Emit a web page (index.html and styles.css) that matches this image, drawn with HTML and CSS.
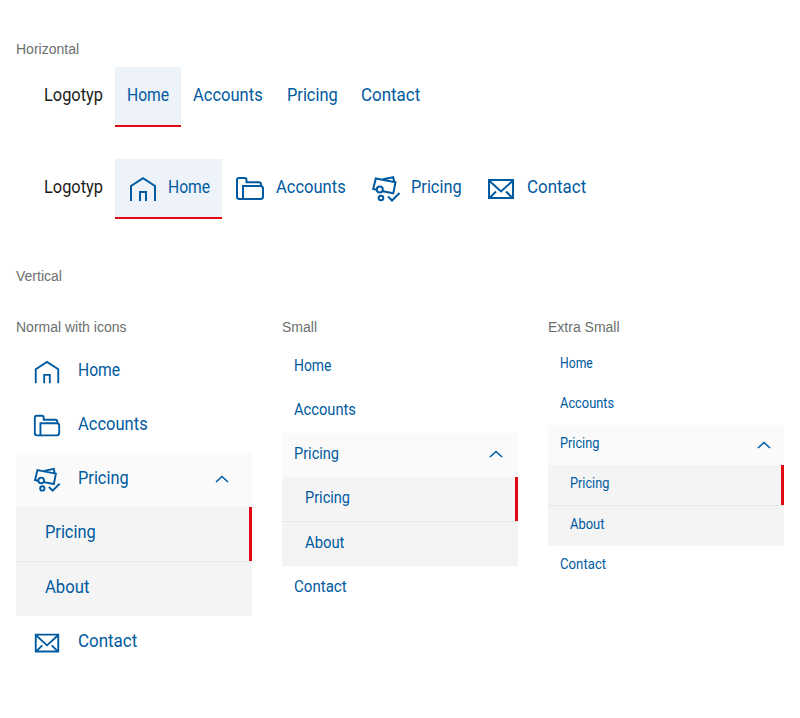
FILE: index.html
```html
<!DOCTYPE html>
<html lang="en">
<head>
<meta charset="utf-8">
<title>Navigation</title>
<link rel="stylesheet" href="styles.css">
</head>
<body>
<svg class="defs" width="0" height="0" aria-hidden="true">
  <symbol id="home" viewBox="0 0 32 32"><path d="M4 28V13L16 5.200 28 13V28M13 28V19H19V28"/></symbol>
  <symbol id="folder" viewBox="0 0 32 32"><path d="M9 26H5.500Q3 26 3 23.500V7Q3 5 5 5H10.500Q12.500 5 12.500 7V9.300H25Q27 9.300 27 11.300V13M9 26V13H26.500Q29 13 29 15.500V23.500Q29 26 26.500 26Z"/></symbol>
  <symbol id="pricing" viewBox="0 0 32 32"><path d="M6.500 16.800L3.200 16 5.800 5.500 25.500 9.200 23.300 20.300 12.800 18.300M13 6.200L23.200 4.200 24.300 9"/><circle cx="9.800" cy="16.400" r="3"/><circle cx="11" cy="25" r="2.300"/><path d="M18 23.500L22 27.500 29.500 20"/></symbol>
  <symbol id="mail" viewBox="0 0 32 32"><path d="M4 7H28V25H4ZM4 7.500L16 18.500 28 7.500M4.500 25L11 18.500M27.500 25L21 18.500"/></symbol>
  <symbol id="up" viewBox="0 0 14 8"><path d="M1 7L7 1.500 13 7"/></symbol>
</svg>

<h2 class="caption">Horizontal</h2>
<nav class="bar">
  <span class="item logo"><span class="label logotyp">Logotyp</span></span>
  <a class="item active"><span class="label home">Home</span></a>
  <a class="item"><span class="label accounts">Accounts</span></a>
  <a class="item"><span class="label pricing">Pricing</span></a>
  <a class="item"><span class="label contact">Contact</span></a>
</nav>
<nav class="bar with-icons">
  <span class="item logo"><span class="label logotyp">Logotyp</span></span>
  <a class="item active"><svg class="icon"><use href="#home"/></svg><span class="label home">Home</span></a>
  <a class="item"><svg class="icon"><use href="#folder"/></svg><span class="label accounts">Accounts</span></a>
  <a class="item"><svg class="icon"><use href="#pricing"/></svg><span class="label pricing">Pricing</span></a>
  <a class="item"><svg class="icon"><use href="#mail"/></svg><span class="label contact">Contact</span></a>
</nav>

<h2 class="caption vertical-title">Vertical</h2>
<div class="columns">
  <section>
    <h3 class="caption">Normal with icons</h3>
    <nav class="menu normal">
      <a class="row"><svg class="icon"><use href="#home"/></svg><span class="label home">Home</span></a>
      <a class="row"><svg class="icon"><use href="#folder"/></svg><span class="label accounts">Accounts</span></a>
      <a class="row open"><svg class="icon"><use href="#pricing"/></svg><span class="label pricing">Pricing</span><svg class="chevron"><use href="#up"/></svg></a>
      <div class="sub">
        <a class="row current"><span class="label pricing">Pricing</span></a>
        <a class="row"><span class="label about">About</span></a>
      </div>
      <a class="row"><svg class="icon"><use href="#mail"/></svg><span class="label contact">Contact</span></a>
    </nav>
  </section>
  <section>
    <h3 class="caption">Small</h3>
    <nav class="menu small">
      <a class="row"><span class="label home">Home</span></a>
      <a class="row"><span class="label accounts">Accounts</span></a>
      <a class="row open"><span class="label pricing">Pricing</span><svg class="chevron"><use href="#up"/></svg></a>
      <div class="sub">
        <a class="row current"><span class="label pricing">Pricing</span></a>
        <a class="row"><span class="label about">About</span></a>
      </div>
      <a class="row"><span class="label contact">Contact</span></a>
    </nav>
  </section>
  <section>
    <h3 class="caption">Extra Small</h3>
    <nav class="menu xsmall">
      <a class="row"><span class="label home">Home</span></a>
      <a class="row"><span class="label accounts">Accounts</span></a>
      <a class="row open"><span class="label pricing">Pricing</span><svg class="chevron"><use href="#up"/></svg></a>
      <div class="sub">
        <a class="row current"><span class="label pricing">Pricing</span></a>
        <a class="row"><span class="label about">About</span></a>
      </div>
      <a class="row"><span class="label contact">Contact</span></a>
    </nav>
  </section>
</div>
</body>
</html>
```
FILE: styles.css
```css
* { box-sizing: border-box; }

body {
  margin: 0;
  padding: 39px 16px 0;
  background: #fff;
  color: #005aa0;
  font-family: Roboto, "Liberation Sans", sans-serif;
}

.defs { position: absolute; }

svg { fill: none; stroke: #005aa0; stroke-width: 2; flex: none; }

.caption {
  margin: 0;
  height: 20px;
  font: 400 14px/20px "Liberation Sans", Arial, sans-serif;
  color: #6b6f6e;
}

/* Labels are condensed; widths are relative to the font size. */
.label {
  flex: none;
  display: block;
  white-space: nowrap;
  transform-origin: 0 50%;
}
.logotyp { width: 3.278em; transform: scaleX(.91); }
.home { width: 2.333em; transform: scaleX(.87); }
.accounts { width: 3.889em; transform: scaleX(.918); }
.pricing { width: 2.778em; transform: scaleX(.91); }
.contact { width: 3.333em; transform: scaleX(.942); }
.about { width: 2.5em; transform: scaleX(.925); }

.bar {
  display: flex;
  height: 60px;
  margin: 8px 0 0 16px;
  font-size: 18px;
  line-height: 24px;
}
.bar.with-icons { margin-top: 32px; }

.item {
  display: flex;
  align-items: center;
  gap: 9px;
  padding: 0 12px 2px;
  border-bottom: 2px solid transparent;
}
.item + .item:not(.active) { gap: 9.7px; }
.logo { color: #1b1b1b; }
.active { background: #edf3f8; border-color: #e30613; }
.item .icon { width: 32px; height: 32px; margin-top: 4px; }

.vertical-title { margin-top: 47px; }

.columns {
  display: grid;
  grid-template-columns: repeat(3, 236px);
  gap: 30px;
  margin-top: 31px;
}

.menu { margin-top: 8px; }
.row {
  display: flex;
  align-items: center;
}
.open { background: #fafafa; }
.sub { background: #f4f4f4; }
.sub .row + .row { border-top: 1px solid #e8e8e8; }
.current { border-right: 3px solid #e30613; }
.chevron { width: 14px; height: 8px; margin-left: auto; stroke-width: 1.6; }

.normal { font-size: 18px; line-height: 24px; }
.normal .row { height: 54px; padding: 0 16px 4px; }
.normal .icon { width: 30px; height: 30px; margin: 4px 16px 0 0; }
.normal .sub .row { padding-left: 28.5px; }
.normal .sub .row + .row { height: 55px; }
.normal .chevron { margin-right: 7px; margin-top: 2px; }

.small { font-size: 16px; line-height: 20px; }
.small .row { height: 44px; padding: 0 15px 2px 12px; }
.small .sub .row { padding-left: 22.5px; }
.small .sub .row + .row { height: 45px; }
.small .chevron { margin-top: 0; }

.xsmall { font-size: 14px; line-height: 18px; }
.xsmall .row { height: 40px; padding: 0 13px 4px 12px; }
.xsmall .sub .row { padding-left: 22px; }
.xsmall .sub .row + .row { height: 41px; }
.xsmall .chevron { margin-top: 4px; }
```
